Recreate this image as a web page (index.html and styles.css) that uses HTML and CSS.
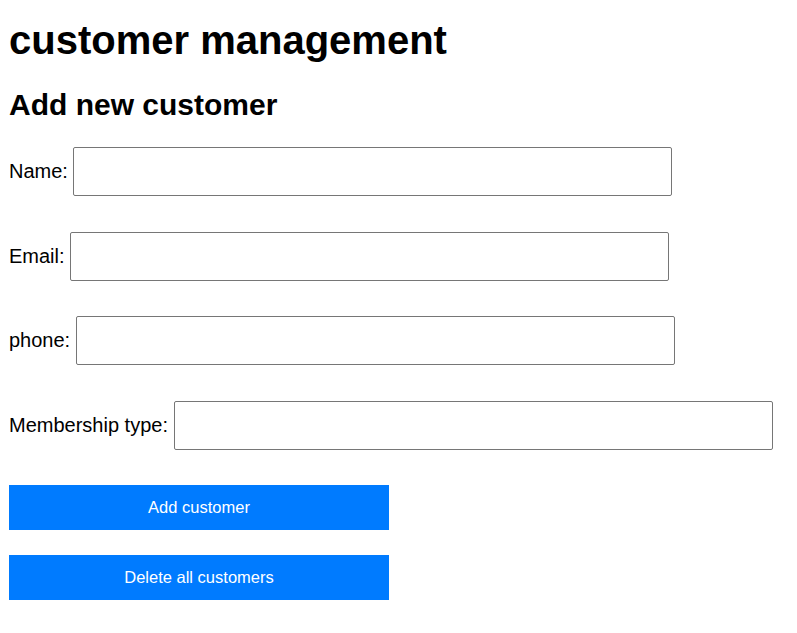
FILE: index.html
```html
<!DOCTYPE html>
<html lang="en">
<head>
<meta charset="utf-8">
<title>customer management</title>
<link rel="stylesheet" href="styles.css">
</head>
<body>
  <h1 class="title">customer management</h1>
  <h2 class="subtitle">Add new customer</h2>
  <form class="form">
    <div class="field"><label class="label" for="name">Name:</label><input class="input" id="name" type="text"></div>
    <div class="field"><label class="label" for="email">Email:</label><input class="input" id="email" type="text"></div>
    <div class="field"><label class="label" for="phone">phone:</label><input class="input" id="phone" type="text"></div>
    <div class="field field-last"><label class="label" for="type">Membership type:</label><input class="input input-wide-label" id="type" type="text"></div>
    <div class="actions">
      <button class="btn" type="button">Add customer</button>
      <button class="btn" type="button">Delete all customers</button>
    </div>
  </form>
</body>
</html>
```

FILE: styles.css
```css
html, body {
  background: #ffffff;
}
body {
  margin: 8px 8px 8px 9px;
  font-family: "Liberation Sans", Arial, sans-serif;
  color: #000;
}
.title {
  font-size: 40px;
  font-weight: bold;
  margin: 5px 0 0 0;
  line-height: 54px;
}
.subtitle {
  font-size: 30px;
  font-weight: bold;
  margin: 18px 0 0 0;
  line-height: 40px;
}
.form {
  margin-top: 22px;
}
.field {
  font-size: 20px;
  height: 49px;
  margin-bottom: 35.6px;
  display: flex;
  align-items: center;
}
.field-last {
  margin-bottom: 35px;
}
.input {
  width: 599px;
  height: 49px;
  box-sizing: border-box;
  border: 1px solid #767676;
  border-radius: 2px;
  padding: 0 8px;
  margin: 0 0 0 5.5px;
  font-size: 16px;
}
.input-wide-label {
  margin-left: 6.5px;
}
.actions {
  display: flex;
  flex-direction: column;
  gap: 25px;
}
.btn {
  width: 380px;
  height: 45px;
  margin: 0;
  border: none;
  background: #007bff;
  color: #fff;
  font-family: "Liberation Sans", Arial, sans-serif;
  font-size: 16.5px;
}
```
